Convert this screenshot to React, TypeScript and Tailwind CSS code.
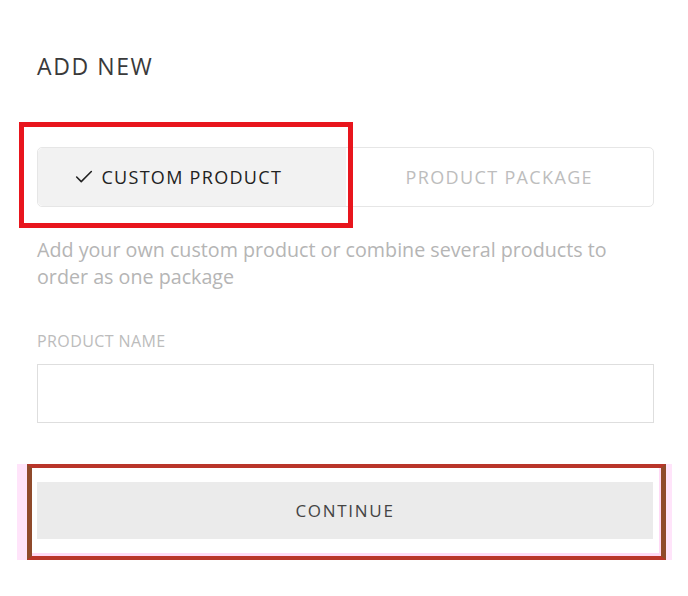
import React, { useState } from 'react';
import { Check } from 'lucide-react';

type Mode = 'custom' | 'package';

export default function App() {
  const [mode, setMode] = useState<Mode>('custom');
  const [name, setName] = useState('');

  const seg = (active: boolean) =>
    active
      ? 'flex-1 flex items-center justify-center bg-[#f2f2f2] text-[#222] rounded-l-[5px]'
      : 'flex-1 flex items-center justify-center text-[#bdbdbd]';

  return (
    <div className="relative w-[688px] h-[596px] bg-white font-['Open_Sans',sans-serif] overflow-hidden">
      <div className="ml-[37px] w-[617px] pt-[51px]">
        <h2 className="text-[23px] leading-[31px] tracking-[1.6px] text-[#3a3a3a]">ADD NEW</h2>

        {/* mode toggle */}
        <div className="mt-[65px] h-[60px] flex border border-[#e6e6e6] rounded-[5px]">
          <button className={seg(mode === 'custom')} onClick={() => setMode('custom')}>
            <span className="relative text-[18px] tracking-[1.3px]">
              {mode === 'custom' && (
                <Check className="absolute -left-[28px] top-1/2 -translate-y-1/2 w-[22px] h-[22px]" strokeWidth={1.7} />
              )}
              CUSTOM PRODUCT
            </span>
          </button>
          <button className={seg(mode === 'package')} onClick={() => setMode('package')}>
            <span className="relative text-[18px] tracking-[1.35px]">PRODUCT PACKAGE</span>
          </button>
        </div>

        <p className="mt-[29px] text-[19.7px] leading-[27px] text-[#b5b5b5] w-[600px]">
          Add your own custom product or combine several products to order as one package
        </p>

        <label className="block mt-[40px] text-[16px] leading-[22px] tracking-[0.4px] text-[#bcbcbc]">PRODUCT NAME</label>
        <input
          value={name}
          onChange={e => setName(e.target.value)}
          className="mt-[12px] block w-full h-[59px] border border-[#dedede] outline-none px-3 text-[16px]"
        />

        {/* continue, highlighted */}
        <div className="mt-[41px] -ml-[20px] w-[655px] h-[96px] bg-[#ffe4fa] pl-[10px]">
          <div className="w-[639px] h-full border-y-[4px] border-x-[5px] border-y-[#b9352a] border-x-[#8f4a2b]">
            <div className="h-full bg-white border-b-[3px] border-r-[2px] border-[#ffd9f5] pl-[5px] pr-[6px] pt-[14px]">
              <button className="w-full h-[57px] bg-[#ebebeb] text-[17px] tracking-[1.7px] text-[#444]">
                CONTINUE
              </button>
            </div>
          </div>
        </div>
      </div>

      {/* annotation outline around the selected option */}
      <div className="absolute left-[19px] top-[122px] w-[334px] h-[106px] border-[5px] border-[#e8151d] pointer-events-none" />
    </div>
  );
}
